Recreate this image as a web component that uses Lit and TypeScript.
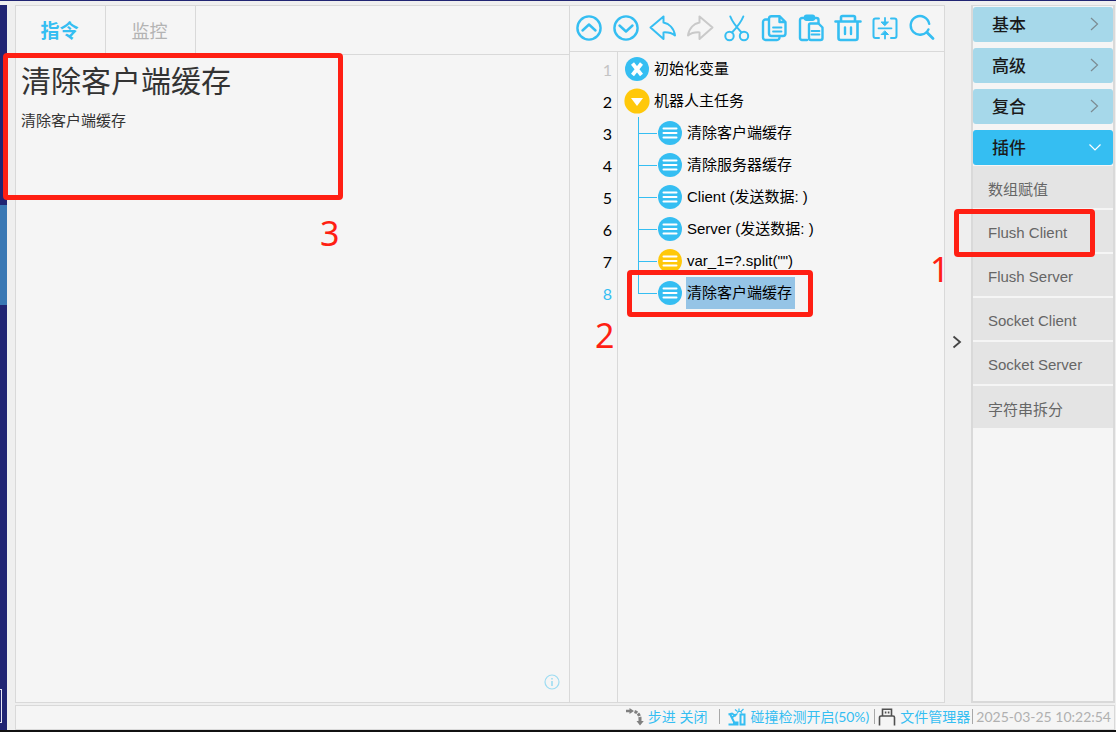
import { LitElement, html, svg, css, type TemplateResult } from "lit";
import { customElement, property, state } from "lit/decorators.js";
import { classMap } from "lit/directives/class-map.js";

const ICONS: Record<string, TemplateResult> = {
  up: svg`<circle cx="14" cy="14" r="11.6"/><path d="M7.500 16.500L14 10.500l6.500 6"/>`,
  down: svg`<circle cx="14" cy="14" r="11.6"/><path d="M7.500 11.500L14 17.500l6.500-6"/>`,
  undo: svg`<path stroke-width="2" d="M1.500 13.400L14.500 2.500v6C20 9.600 25 14 26 21.500C23 19 19 18.200 14.500 18.400V25Z"/>`,
  redo: svg`<path stroke-width="2" d="M26.500 13.400L13.500 2.500v6C8 9.600 3 14 2 21.500C5 19 9 18.200 13.500 18.400V25Z"/>`,
  cut: svg`<g stroke-width="2"><circle cx="6.500" cy="22" r="4.200"/><circle cx="21" cy="22" r="4.200"/><path d="M7.300 2.500C9 7 12 11.500 18.500 18.500M20.300 2.500C18.600 7 15.600 11.500 9 18.500"/></g>`,
  copy: svg`<path d="M11.500 2.200h8l6 5.800v11.500a2.500 2.500 0 0 1-2.500 2.500H11.500a2.500 2.500 0 0 1-2.500-2.500V4.700A2.500 2.500 0 0 1 11.500 2.200zM19.500 2.500V8h5.500"/><path d="M8.500 5.500H5.500A2.500 2.500 0 0 0 3 8v15.500A2.500 2.500 0 0 0 5.500 26H17a2.500 2.500 0 0 0 2.500-2.500"/><path stroke-width="1.800" d="M13 13.500h8.500M13 17.500h8.500"/>`,
  paste: svg`<path d="M10 26H5a2 2 0 0 1-2-2V6a2 2 0 0 1 2-2h14.500a2 2 0 0 1 2 2v3"/><rect x="8" y="1.800" width="9" height="4" rx="1.500"/><path d="M13.500 9.500h8l4 4V24a2 2 0 0 1-2 2h-9.500a2 2 0 0 1-2-2V11a1.500 1.500 0 0 1 1.500-1.500z"/><path stroke-width="1.800" d="M14.500 17h8M14.500 20.500h8"/>`,
  trash: svg`<path stroke-width="2.600" d="M1.500 7.500h25M7 7V3.500a1.500 1.500 0 0 1 1.500-1.500h11a1.500 1.500 0 0 1 1.500 1.500V7M4.500 8v16a2 2 0 0 0 2 2h15a2 2 0 0 0 2-2V8"/><path d="M11 13.500v6.500M17 13.500v6.500"/>`,
  merge: svg`<path d="M8 4.500H4.500a2 2 0 0 0-2 2v15.500a2 2 0 0 0 2 2H8M20 4.500h3.500a2 2 0 0 1 2 2v15.500a2 2 0 0 1-2 2H20" stroke-width="2"/><path stroke-width="1.800" d="M7.500 14.300h13M14 4v6M14 24.500v-6"/><path stroke-width="1" fill="currentColor" d="M10.500 8h7L14 11.500zM10.500 20.500h7L14 17z"/>`,
  search: svg`<path stroke-width="2.400" d="M20.400 15.400A9.300 9.300 0 1 1 21.200 9.900"/><path stroke-width="2.800" d="M19 18.500L25 24.500"/>`,
};

@customElement("tool-bar")
class ToolBar extends LitElement {
  static styles = css`
    :host { display: flex; height: 46px; box-sizing: border-box; border-bottom: 1px solid #d9d9d9; }
    .tool { flex: 0 0 37px; display: flex; align-items: center; justify-content: center; padding: 0 0 2px;
      border: 0; background: none; color: #35bef2; cursor: pointer; }
    .tool:disabled { color: #c9c9c9; cursor: default; }
    .icon { width: 28px; height: 28px; fill: none; stroke: currentColor; stroke-width: 2.4;
      stroke-linejoin: round; stroke-linecap: round; }
  `;

  private tools = [
    ["up", "上移"], ["down", "下移"], ["undo", "撤销"], ["redo", "重做"], ["cut", "剪切"],
    ["copy", "复制"], ["paste", "粘贴"], ["trash", "删除"], ["merge", "折叠"], ["search", "搜索"],
  ];

  render() {
    return this.tools.map(([name, label]) => html`
      <button class="tool" aria-label=${label} ?disabled=${name === "redo"}>
        <svg class="icon" viewBox="0 0 28 28">${ICONS[name]}</svg>
      </button>`);
  }
}

type Row = { kind: "var" | "root" | "step" | "script"; text: string };

@customElement("program-tree")
class ProgramTree extends LitElement {
  static styles = css`
    :host { flex: 1; display: flex; min-height: 0; font-size: 15px; color: #000; }
    .gutter, .tree { margin: 0; padding: 0; list-style: none; }
    .gutter { box-sizing: border-box; width: 48px; padding: 2px 5px 0 0; border-right: 1px solid #d9d9d9;
      text-align: right; font-family: Lato, sans-serif; font-size: 16px; }
    .number { height: 32px; line-height: 32px; }
    .off { color: #c4c4c4; }
    .current { color: #35bef2; }
    .tree { flex: 1; min-width: 0; padding-top: 1px; }
    .row { display: flex; align-items: center; height: 32px; padding-left: 6px; }
    .branch { flex: 0 0 19px; align-self: stretch; margin-left: 14px; display: flex; flex-direction: column; }
    .arm { flex: 0 0 16px; border-left: 1px solid #35bef2; border-bottom: 1px solid #35bef2; }
    .stem { flex: 1; border-left: 1px solid #35bef2; }
    .last .stem { border-color: transparent; }
    .badge { flex: none; width: 26px; height: 26px; }
    .name { height: 32px; padding: 0 3px 0 1px; margin-left: 3px; border: 0; background: none;
      font: inherit; line-height: 32px; color: inherit; white-space: nowrap; cursor: pointer; }
    .selected .name { background: #95c4e6; }
  `;

  @state() private selected = 7;

  private rows: Row[] = [
    { kind: "var", text: "初始化变量" },
    { kind: "root", text: "机器人主任务" },
    { kind: "step", text: "清除客户端缓存" },
    { kind: "step", text: "清除服务器缓存" },
    { kind: "step", text: "Client (发送数据: )" },
    { kind: "step", text: "Server (发送数据: )" },
    { kind: "script", text: 'var_1=?.split("")' },
    { kind: "step", text: "清除客户端缓存" },
  ];

  private badge(kind: Row["kind"]) {
    const fill = kind === "root" || kind === "script" ? "#ffc80a" : "#35bef2";
    const mark = kind === "var"
      ? svg`<path d="M8.500 7.500l9 11.500M17.500 7.500l-9 11.500" stroke="#fff" stroke-width="3.800"/>`
      : kind === "root"
        ? svg`<path d="M7 10h12l-6 8z" fill="#fff"/>`
        : svg`<path d="M6.500 8.500h13M6.500 13h13M6.500 17.500h13" stroke="#fff" stroke-width="2" stroke-linecap="round"/>`;
    return html`<svg class="badge" viewBox="0 0 26 26"><circle cx="13" cy="13" r=${kind === "root" ? 12.6 : 12} fill=${fill}/>${mark}</svg>`;
  }

  render() {
    const last = this.rows.length - 1;
    return html`
      <ol class="gutter">
        ${this.rows.map((_, i) => html`
          <li class=${classMap({ number: true, off: i === 0, current: i === this.selected })}>${i + 1}</li>`)}
      </ol>
      <ul class="tree">
        ${this.rows.map((row, i) => html`
            <li class=${classMap({ row: true, last: i === last, selected: i === this.selected })}>
              ${i > 1 ? html`<span class="branch"><span class="arm"></span><span class="stem"></span></span>` : null}
              ${this.badge(row.kind)}
              <button class="name" @click=${() => { this.selected = i; }}>${row.text}</button>
            </li>`)}
      </ul>`;
  }
}

@customElement("command-menu")
class CommandMenu extends LitElement {
  static styles = css`
    :host { display: flex; flex-direction: column; gap: 6px; box-sizing: border-box; background: #f5f5f5;
      border: 2px solid #d9d9d9; border-top-width: 1px; padding-top: 1px; }
    .group { display: flex; align-items: center; justify-content: space-between; width: 100%; height: 35px;
      padding: 0 12px 2px 19px; border: 0; border-radius: 3px; background: #a6d8ea; color: #1a1a1a;
      font: inherit; font-size: 17px; font-weight: 500; cursor: pointer; }
    .open { background: #35bef2; color: #1a1a1a; }
    .chevron { width: 12px; height: 14px; fill: none; stroke: #7c8b92; stroke-width: 1.2; }
    .open .chevron { stroke: #fff; }
    .items { display: flex; flex-direction: column; gap: 2px; margin: -5px 0 0; padding: 0; list-style: none; }
    .item { display: block; width: 100%; height: 42px; padding: 2px 15px 0; border: 0; background: #e4e4e4;
      color: #666; font: inherit; font-size: 15px; text-align: left; cursor: pointer; }
  `;

  private groups = ["基本", "高级", "复合", "插件"];
  private items = ["数组赋值", "Flush Client", "Flush Server", "Socket Client", "Socket Server", "字符串拆分"];

  render() {
    return html`
      ${this.groups.map((label) => {
        const open = label === "插件";
        return html`
          <button class=${classMap({ group: true, open })} aria-expanded=${open}>
            ${label}
            <svg class="chevron" viewBox="0 0 12 14"><path d=${open ? "M0.500 4.500l5.500 5.500 5.500-5.500" : "M2 1l6.500 6L2 13"}/></svg>
          </button>`;
      })}
      <ul class="items">
        ${this.items.map((label) => html`<li><button class="item">${label}</button></li>`)}
      </ul>`;
  }
}

@customElement("status-bar")
class StatusBar extends LitElement {
  static styles = css`
    :host { display: flex; align-items: center; justify-content: flex-end; height: 25px; box-sizing: border-box;
      border: 1px solid #d9d9d9; background: #f5f5f5; padding: 0 3px 2px 0;
      font-family: Lato, "Noto Sans CJK SC", sans-serif; font-size: 14px; line-height: 21px; white-space: nowrap; }
    .entry { display: flex; align-items: center; gap: 4px; height: 21px; padding: 0; border: 0; background: none;
      font: inherit; color: #35bef2; cursor: pointer; }
    .icon { width: 18px; height: 18px; fill: none; }
    .bar { width: 1px; height: 15px; margin: 0 3px 0 5px; background: #a8a8a8; }
    .wide { margin: 0 8px 0 12px; }
    .tight { margin: 0 3px 0 2px; }
    .time { color: #b0b0b0; }
  `;

  render() {
    return html`
      <button class="entry">
        <svg class="icon" viewBox="0 0 18 18"><path d="M0 1.800h3.500V0L8 3 3.500 6V4.200H0z" fill="#808080"/><path d="M8.500 3.500c3 1 4.800 3 5.500 6.500" stroke="#808080" stroke-width="3" stroke-dasharray="3 1"/><path d="M12.500 9.500h3V13h2.300L14 17.500 10.500 13h2z" fill="#808080"/></svg>
        步进 关闭
      </button>
      <span class="bar wide"></span>
      <button class="entry">
        <svg class="icon" viewBox="0 0 18 18"><path d="M.5 6.500l3.500-1 4 2.500M2.500 7l4 8M.5 16.500h9v-2H5M4.500 9L9 6M12.500 6.500h4v10h-4zM12.500 9v7" stroke="#35bef2" stroke-width="2"/><path d="M7 1.500l2.500 2M11 .500v3M15.500 1L13 3.500M9 5.500l1.500-2h2l1.500 2" stroke="#35bef2" stroke-width="1.200"/></svg>
        碰撞检测开启(50%)
      </button>
      <span class="bar"></span>
      <button class="entry">
        <svg class="icon" viewBox="0 0 18 18"><path d="M4.500 8V1.200h9V8M1.500 17.500V9.500a1.500 1.500 0 0 1 1.500-1.500h12a1.500 1.500 0 0 1 1.500 1.500v8" stroke="#505050" stroke-width="1.600"/><path d="M6.800 3.500h1.600v2H6.800zM9.800 3.500h1.600v2H9.800z" fill="#505050"/></svg>
        文件管理器
      </button>
      <span class="bar tight"></span>
      <time class="time">2025-03-25 10:22:54</time>`;
  }
}

@customElement("step-mark")
class StepMark extends LitElement {
  static styles = css`
    :host { position: absolute; box-sizing: border-box; border: 5px solid #ff1f13; border-radius: 4px; pointer-events: none; }
    .digit { position: absolute; color: #ff1f13; font-family: "Noto Sans", sans-serif; font-size: 34px; line-height: 34px; }
    .d1 { left: -29px; top: 38px; }
    .d2 { left: -37px; top: 43px; }
    .d3 { left: 312px; top: 158px; }
  `;

  @property({ type: Number }) step = 1;

  render() {
    return html`<span class="digit d${this.step}">${this.step}</span>`;
  }
}

@customElement("app-root")
class AppRoot extends LitElement {
  static styles = css`
    :host { position: relative; display: flex; flex-direction: column; box-sizing: border-box; height: 100vh;
      overflow: hidden; background: #efefef; border-top: 1px solid #212573; border-bottom: 2px solid #111;
      padding-top: 4px; font-family: "Liberation Sans", "Noto Sans CJK SC", sans-serif; }
    .frame { flex: 1; min-height: 0; display: flex; gap: 8px; padding-right: 1px; }
    .rail { flex: 0 0 7px; display: flex; flex-direction: column; background: #212573; }
    .thumb { height: 100px; margin-top: 200px; background: #3a78b4; }
    .notch { width: 1px; height: 32px; margin-top: auto; margin-bottom: 7px; border: 1px solid #e8e8f4; border-left: 0; }
    .main { flex: 1; min-width: 0; display: flex; flex-direction: column; gap: 2px; }
    .columns { flex: 1; min-height: 0; display: grid; grid-template-columns: minmax(0, 554fr) minmax(0, 376fr) 26px 144px; }
    .panel { display: flex; flex-direction: column; min-height: 0; background: #f5f5f5; border: 1px solid #d9d9d9; }
    .info { border-right-width: 0; }
    .tabs { display: flex; height: 49px; box-sizing: border-box; border-bottom: 1px solid #d9d9d9; }
    .tab { width: 90px; padding: 0 2px 0 0; border: 0; border-right: 1px solid #d9d9d9; background: none;
      font: inherit; font-size: 18px; color: #b3b3b3; cursor: pointer; }
    .active { padding-bottom: 2px; font-size: 19px; font-weight: 700; color: #35bef2; }
    .doc { flex: 1; padding: 7px 5px; color: #333; }
    .title { margin: 0; font-size: 30px; line-height: 40px; font-weight: 400; }
    .text { margin: 8px 0 0; font-size: 15px; line-height: 22px; }
    .help { align-self: flex-end; width: 16px; height: 16px; margin: 0 9px 12px; padding: 0; border: 0;
      background: none; color: #9ddcf2; cursor: pointer; }
    .help-icon { display: block; width: 16px; height: 16px; fill: none; stroke: currentColor; }
    .fold { align-self: center; height: 24px; margin-bottom: 24px; padding: 0 2px 0 0; border: 0; background: none; cursor: pointer; }
    .fold-icon { display: block; width: 10px; height: 14px; margin: 0 auto; fill: none; stroke: #444; stroke-width: 1.800; }
    .m1 { left: 954px; top: 208px; width: 141px; height: 48px; }
    .m2 { left: 627px; top: 269px; width: 186px; height: 47px; }
    .m3 { left: 3px; top: 52px; width: 340px; height: 147px; }
  `;

  render() {
    return html`
      <div class="frame">
        <div class="rail"><div class="thumb"></div><div class="notch"></div></div>
        <div class="main">
          <div class="columns">
            <section class="panel info">
              <nav class="tabs">
                <button class="tab active">指令</button>
                <button class="tab">监控</button>
              </nav>
              <article class="doc">
                <h1 class="title">清除客户端缓存</h1>
                <p class="text">清除客户端缓存</p>
              </article>
              <button class="help" aria-label="帮助">
                <svg class="help-icon" viewBox="0 0 16 16"><circle cx="8" cy="8" r="7" stroke-width="1.200"/><path d="M8 7v5M8 4v1.600" stroke-width="1.600"/></svg>
              </button>
            </section>
            <section class="panel">
              <tool-bar></tool-bar>
              <program-tree></program-tree>
            </section>
            <button class="fold" aria-label="收起">
              <svg class="fold-icon" viewBox="0 0 10 14"><path d="M1.500 1.500L8 7l-6.500 5.500"/></svg>
            </button>
            <command-menu></command-menu>
          </div>
          <status-bar></status-bar>
        </div>
      </div>
      <step-mark class="m1" .step=${1}></step-mark>
      <step-mark class="m2" .step=${2}></step-mark>
      <step-mark class="m3" .step=${3}></step-mark>`;
  }
}
